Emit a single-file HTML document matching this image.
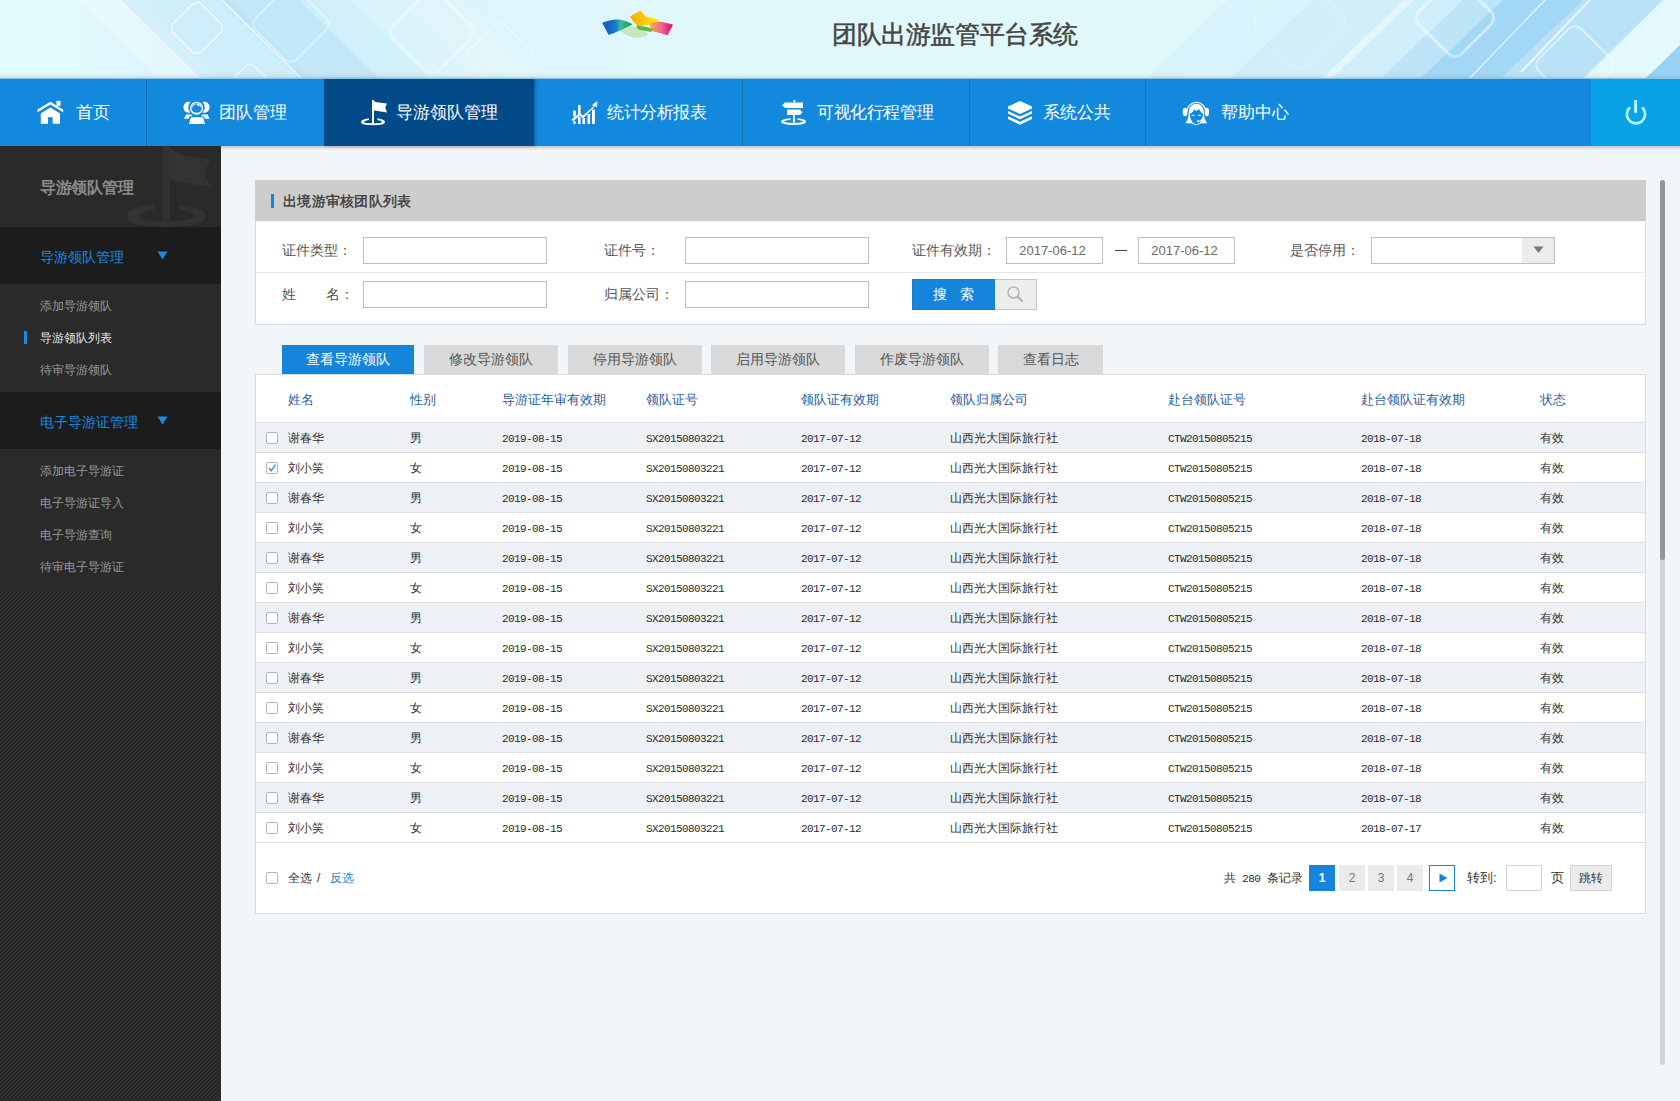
<!DOCTYPE html>
<html><head><meta charset="utf-8">
<style>
*{margin:0;padding:0;box-sizing:border-box}
html,body{width:1680px;height:1101px;overflow:hidden}
body{font-family:"Liberation Sans",sans-serif;background:#f3f6f9;position:relative;color:#333}
.abs{position:absolute}
#hdr{left:0;top:0;width:1680px;height:79px;background:#def6fc;overflow:hidden}
#nav{left:0;top:79px;width:1680px;height:67px;background:#1289dc}
.nv{position:absolute;top:0;height:67px;color:#fff;font-size:17px;line-height:67px}
.sep{position:absolute;top:0;width:1px;height:67px;background:#0d6cb4}
#side{left:0;top:146px;width:221px;height:955px;background:#2a2a2a;overflow:hidden}
.sb-band{position:absolute;left:0;width:221px;background:#1c1c1c}
.sb-t{position:absolute;left:40px;font-size:14px;color:#1a8ae0;line-height:20px}
.sb-i{position:absolute;left:40px;font-size:12px;color:#999;line-height:16px}
.panel{position:absolute;background:#fff;border:1px solid #dcdcdc}
.lbl{position:absolute;font-size:14px;color:#555;line-height:20px}
.inp{position:absolute;height:27px;border:1px solid #bdbdbd;background:#fff}
.tab{position:absolute;top:345px;height:29px;background:#d9d9d9;color:#555;font-size:14px;line-height:29px;text-align:center}
.tab.on{background:#1585dc;color:#fff}
.th{position:absolute;top:391px;font-size:13px;color:#2b5c95;line-height:18px}
.row{position:absolute;left:256px;width:1389px;height:30px;border-top:1px solid #dedede}
.row.odd{background:#edf0f5}
.c{position:absolute;top:0;line-height:30px;font-size:12px;color:#333;white-space:nowrap}
.m{font-family:"Liberation Mono",monospace;font-size:11px;letter-spacing:-0.6px;padding-top:1px;color:#2a2a2a}
.cb{position:absolute;left:10px;top:9px;width:12px;height:12px;border:1px solid #b5b5b5;border-radius:2px;background:#fff}
.pg{position:absolute;top:865px;width:26px;height:26px;background:#ebebeb;color:#777;font-size:12px;line-height:26px;text-align:center}
</style></head><body>

<!-- HEADER -->
<div id="hdr" class="abs">
<svg width="1680" height="79" style="position:absolute;left:0;top:0">
<defs>
<linearGradient id="hg" x1="0" x2="1" y1="0" y2="0">
<stop offset="0" stop-color="#e1f9fd"/><stop offset="0.05" stop-color="#e1f9fd"/><stop offset="0.12" stop-color="#d9f3fb"/><stop offset="0.25" stop-color="#dbf4fb"/><stop offset="0.4" stop-color="#e0f8fc"/><stop offset="1" stop-color="#e1f9fd"/>
</linearGradient>
</defs>
<rect width="1680" height="79" fill="url(#hg)"/>
<!-- left diagonal bands (\ direction) -->
<polygon points="80,0 140,0 220,79 160,79" fill="#ffffff" opacity="0.25"/>
<polygon points="120,0 230,0 310,79 200,79" fill="#bfe6f8" opacity="0.45"/>
<polygon points="220,0 300,0 380,79 300,79" fill="#a9dcf6" opacity="0.5"/>
<polygon points="300,0 350,0 430,79 380,79" fill="#c6ebf9" opacity="0.5"/>
<line x1="222" y1="0" x2="302" y2="79" stroke="#fff" stroke-width="1.5" opacity="0.8"/>
<line x1="120" y1="0" x2="200" y2="79" stroke="#fff" stroke-width="3" opacity="0.35"/>
<rect x="177" y="8" width="40" height="40" rx="7" transform="rotate(45 197 28)" fill="none" stroke="#fff" stroke-width="1.5" opacity="0.75"/>
<rect x="262" y="-5" width="58" height="58" rx="8" transform="rotate(45 291 24)" fill="none" stroke="#fff" stroke-width="2" opacity="0.4"/>
<rect x="230" y="70" width="40" height="40" rx="7" transform="rotate(45 250 90)" fill="none" stroke="#fff" stroke-width="2" opacity="0.5"/>
<rect x="400" y="0" width="64" height="64" rx="10" transform="rotate(45 432 32)" fill="none" stroke="#fff" stroke-width="2.5" opacity="0.35"/>
<rect x="475" y="30" width="50" height="50" rx="8" transform="rotate(45 500 55)" fill="none" stroke="#fff" stroke-width="1.5" opacity="0.35"/>
<rect x="0" y="0" width="82" height="79" fill="#e2f9fd" opacity="0.6"/>
<polygon points="400,0 460,0 540,79 480,79" fill="#ffffff" opacity="0.15"/>
<!-- right diagonal bands (/ direction) -->
<polygon points="1145,79 1228,0 1680,0 1680,79" fill="#d2f0fa" opacity="0.6"/>
<polygon points="1230,79 1313,0 1680,0 1680,79" fill="#c5eaf9" opacity="0.5"/>
<polygon points="1321,79 1404,0 1414,0 1331,79" fill="#ffffff" opacity="0.45"/>
<polygon points="1380,79 1463,0 1680,0 1680,79" fill="#aedcf6" opacity="0.55"/>
<polygon points="1420,79 1503,0 1583,0 1500,79" fill="#8ccdf3" opacity="0.55"/>
<polygon points="1500,79 1583,0 1663,0 1580,79" fill="#b5e0f7" opacity="0.6"/>
<polygon points="1583,79 1663,0 1680,0 1680,79" fill="#e4f9fd" opacity="1"/>
<polygon points="1645,79 1680,45 1680,79" fill="#98d3f5"/>
<line x1="1469" y1="79" x2="1545" y2="0" stroke="#fff" stroke-width="1.2" opacity="0.85"/>
<line x1="1521" y1="72" x2="1590" y2="0" stroke="#fff" stroke-width="1.8" opacity="0.8"/>
<rect x="1265" y="-12" width="70" height="70" rx="10" transform="rotate(45 1300 23)" fill="none" stroke="#fff" stroke-width="1.5" opacity="0.3"/>
<rect x="1425" y="-12" width="60" height="60" rx="9" transform="rotate(45 1455 18)" fill="none" stroke="#fff" stroke-width="3" opacity="0.45"/>
<rect x="1545" y="35" width="60" height="60" rx="9" transform="rotate(45 1575 65)" fill="none" stroke="#fff" stroke-width="2" opacity="0.5"/>
<!-- bottom shadow -->
<defs><linearGradient id="sh" x1="0" x2="0" y1="0" y2="1"><stop offset="0" stop-color="#8c7a66" stop-opacity="0"/><stop offset="0.6" stop-color="#8c7a66" stop-opacity="0.08"/><stop offset="1" stop-color="#9a7a56" stop-opacity="0.35"/></linearGradient></defs>
<rect x="0" y="72" width="1680" height="7" fill="url(#sh)"/>
</svg>
<svg width="85" height="40" viewBox="0 0 85 40" style="position:absolute;left:595px;top:5px">
<defs>
<linearGradient id="lg1" x1="0" x2="1"><stop offset="0" stop-color="#1556b8"/><stop offset="0.45" stop-color="#0f7fcc"/><stop offset="0.6" stop-color="#3cb8a0"/><stop offset="1" stop-color="#10a050"/></linearGradient>
<linearGradient id="lg2" x1="0" x2="1"><stop offset="0" stop-color="#f8a800"/><stop offset="1" stop-color="#fff000"/></linearGradient>
<linearGradient id="lg3" x1="0" x2="1"><stop offset="0" stop-color="#f8b040"/><stop offset="0.5" stop-color="#f46a8a"/><stop offset="1" stop-color="#e0007a"/></linearGradient>
</defs>
<path d="M25,25.5 C32,20 45,20 53,29.5 C46,34 35,34.5 25,25.5 Z" fill="#c8e6bc"/>
<path d="M7.1,17.7 C13,15.5 19,14 25.3,14.7 C30,15.3 34,17 37.5,19.2 C34,21.5 29,23.5 24.3,25.8 C20,27.8 17,29 13.7,29.9 C11,25 9,21 7.1,17.7 Z" fill="url(#lg1)"/>
<path d="M35,11.6 L45.5,5.6 L50.6,11.6 C56,13 60,13.5 64.8,14.7 L55.7,19.2 C50,20 47,21 44,21.8 C41,19 39,17.5 38.5,16.7 Z" fill="url(#lg2)"/>
<path d="M54,18.5 C59,17.2 62,16.7 65.8,16.7 C70,17.5 74,18.5 78,19.7 L72.4,30.4 C69,29 66,28.5 63.3,27.8 C61,27.2 60,26.8 57.5,26.3 Z" fill="url(#lg3)"/>
<path d="M41,20.5 C47,20.8 53,22 58.5,24.3 L56,27 C51,26 46,25 43,24.2 Z" fill="#66b43e"/>
</svg>
<div class="abs" style="left:832px;top:18px;font-size:25px;line-height:32px;color:#444;letter-spacing:-0.4px;-webkit-text-stroke:0.5px #444">团队出游监管平台系统</div>
</div>

<!-- NAV -->
<div id="nav" class="abs">

<div class="abs" style="left:324px;top:0;width:210px;height:67px;background:#024a88;box-shadow:2px 0 3px rgba(0,0,0,0.25)"></div>
<div class="abs" style="left:1591px;top:0;width:89px;height:67px;background:#0aa2e6"></div>
<div class="sep" style="left:146px"></div>
<div class="sep" style="left:742px"></div>
<div class="sep" style="left:969px"></div>
<div class="sep" style="left:1145px"></div>
<svg width="1680" height="67" style="position:absolute;left:0;top:0" fill="#fff">
<g transform="translate(0,-79)">
<!-- house -->
<path d="M37.5,109.5 L50.3,101.8 L63.2,109.5 L63.2,112.2 L50.3,104.6 L37.5,112.2 Z"/>
<rect x="56.5" y="100.8" width="4" height="5"/>
<path d="M40.8,113.6 L50.3,107.6 L60,113.6 L60,123.8 L52.7,123.8 L52.7,117.3 L48,117.3 L48,123.8 L40.8,123.8 Z"/>
<!-- team -->
<path d="M190.5,102 A5.5,5.5 0 1 0 190.5,112.5 A7,7 0 0 1 190.5,102 Z"/>
<path d="M202.5,102 A5.5,5.5 0 1 1 202.5,112.5 A7,7 0 0 0 202.5,102 Z"/>
<circle cx="196.6" cy="108.2" r="6.5"/>
<path d="M191.5,108.6 Q192.6,105.8 195,104.8 L195.6,102.8 L197,105.3 Q200.6,105.6 201.7,108.2 A5.15,5.15 0 0 1 191.5,108.6 Z" fill="#1289dc"/>
<path d="M191.3,108.5 A5.3,5.3 0 0 1 201.9,108.5" fill="none" stroke="#1289dc" stroke-width="0.6"/>
<path d="M184,118.8 L186,114.5 L191,114.5 L192.5,116 L189.5,116.5 L188.8,118.8 Z"/>
<path d="M209.6,118.8 L207.6,114.5 L202.6,114.5 L201,116 L204,116.5 L204.8,118.8 Z"/>
<path d="M188.9,123.9 L191,117.3 L203,117.3 L205,123.9 Z"/>
<!-- flag -->
<rect x="372" y="100" width="2" height="23.5"/>
<path d="M374,101 L375.5,102 Q380,102.5 387,103.6 L385.3,107.5 L387,112.6 Q381,111.5 374,110.5 Z"/>
<path d="M369,118.3 Q361,119.5 361,122 Q361,125.3 373,125.3 Q385,125.3 385,122 Q385,119.5 377.3,118.3 L377.3,120 Q382,120.8 382,122 Q382,123.2 373,123.2 Q364,123.2 364,122 Q364,120.8 369,120 Z"/>
<!-- chart -->
<rect x="573.2" y="110.5" width="2.6" height="6"/>
<rect x="578" y="105" width="2.6" height="10"/>
<rect x="573.5" y="121" width="2" height="3"/>
<rect x="578" y="117" width="2.6" height="7"/>
<rect x="582.5" y="118" width="2.6" height="6"/>
<rect x="587.5" y="114" width="2.6" height="10"/>
<rect x="592" y="109.5" width="2.8" height="14.5"/>
<path d="M572,119.5 L579.5,113.5 L583,116 L594,106.5 L592.5,105 L597,101.8 L596.5,107 L595.3,105.5 L583,117.8 L579.6,115.5 L573,120.8 Z" stroke="#fff" stroke-width="0.8"/>
<!-- signpost -->
<rect x="793.5" y="100" width="1.8" height="2.5"/>
<path d="M785,102.5 L803,102.5 L803,108 L785,108 L782,105.3 Z"/>
<path d="M787,109.4 L800,109.4 L802.5,112.3 L800,115 L787,115 Z"/>
<rect x="793" y="115" width="2" height="8.5"/>
<path d="M790.5,118.3 Q781,119.3 781,121.6 Q781,125 794,125 Q806,125 806,121.6 Q806,119.3 797.5,118.3 L797.5,119.9 Q803,120.6 803,121.6 Q803,123 794,123 Q784,123 784,121.6 Q784,120.6 790.5,119.9 Z"/>
<!-- layers -->
<path d="M1020,101 L1032,106.5 L1032,108.6 L1020,114 L1008,108.6 L1008,106.5 Z"/>
<path d="M1008,111 L1020,116.6 L1032,111 L1032,113.6 L1020,119.3 L1008,113.6 Z"/>
<path d="M1008,116.2 L1020,121.8 L1032,116.2 L1032,119 L1020,124.8 L1008,119 Z"/>
<!-- headset -->
<path d="M1186.4,113.5 A9.9,11.2 0 0 1 1206.2,113.5" fill="none" stroke="#fff" stroke-width="1.4"/>
<ellipse cx="1185" cy="112" rx="2.3" ry="4.2"/>
<ellipse cx="1206.8" cy="112" rx="2.3" ry="4.2"/>
<path stroke="#1289dc" stroke-width="0.8" d="M1188.2,112.5 A8.1,9.2 0 0 1 1204.4,112.5 L1204.8,118 L1207.6,123.8 L1201,123.8 Q1198.5,125.4 1196.3,125.4 Q1194,125.4 1191.6,123.8 L1185,123.8 L1187.8,118 Z"/>
<path d="M1189.6,114.2 C1192,113 1194,111 1194.6,108.8 L1195.2,111 C1197,110.5 1198,110 1198.8,109 C1200,111 1202,113 1203.2,114.2 C1203,119 1200,124.3 1196.4,124.3 C1192.8,124.3 1190,119 1189.6,114.2 Z" fill="#1289dc"/>
<path d="M1191.3,116 A1.6,1.2 0 0 1 1194.6,116 Z"/>
<path d="M1197.8,116 A1.6,1.2 0 0 1 1201.1,116 Z"/>
<path d="M1203,116.5 Q1202.5,120.8 1198,121.3" fill="none" stroke="#fff" stroke-width="1.1"/>
<circle cx="1197.8" cy="121.2" r="1"/>
</g>
<g transform="translate(0,-79)" fill="none" stroke="#bdf2ff" stroke-width="2.6">
<path d="M1630,107.5 A9.05,9.05 0 1 0 1642,107.5"/>
<line x1="1635.6" y1="100.1" x2="1635.6" y2="112.8" stroke-width="3"/>
</g>
</svg>
<div class="nv" style="left:76px">首页</div>
<div class="nv" style="left:219px">团队管理</div>
<div class="nv" style="left:396px">导游领队管理</div>
<div class="nv" style="left:607px;letter-spacing:-0.4px">统计分析报表</div>
<div class="nv" style="left:817px;letter-spacing:-0.4px">可视化行程管理</div>
<div class="nv" style="left:1043px">系统公共</div>
<div class="nv" style="left:1221px">帮助中心</div>
</div>

<!-- SIDEBAR -->
<div id="side" class="abs">
<svg width="221" height="81" style="position:absolute;left:0;top:0">
<rect width="221" height="81" fill="#2a2a2a"/>
<g fill="#333333" transform="translate(0,-146)">
<rect x="163.2" y="146" width="6.3" height="74"/>
<path d="M169.5,147 Q178,158 210.5,159 L204,173 L211,187 Q190,184 169.5,180 Z"/>
<path d="M154,205 Q127,208 127,215.5 Q127,227 166.4,227 Q206,227 206,215.5 Q206,208 179,205 L179,210 Q194,212 194,215.5 Q194,221 166.4,221 Q139,221 139,215.5 Q139,212 154,210 Z"/>
</g>
</svg>
<div class="abs" style="left:40px;top:32px;font-size:16px;letter-spacing:-0.5px;font-weight:bold;color:#8a8a8a;line-height:20px">导游领队管理</div>
<div class="sb-band" style="top:81px;height:57px"></div>
<div class="sb-t" style="top:101px">导游领队管理</div>
<svg width="12" height="10" style="position:absolute;left:157px;top:105px"><path d="M0.5,0.5 L10.5,0.5 L5.5,8.5 Z" fill="#1a8ae0"/></svg>
<div class="sb-i" style="top:152px">添加导游领队</div>
<div class="abs" style="left:24px;top:185px;width:3px;height:13px;background:#1a8ae0"></div>
<div class="sb-i" style="top:184px;color:#e6e6e6">导游领队列表</div>
<div class="sb-i" style="top:216px">待审导游领队</div>
<div class="sb-band" style="top:246px;height:57px"></div>
<div class="sb-t" style="top:266px">电子导游证管理</div>
<svg width="12" height="10" style="position:absolute;left:157px;top:270px"><path d="M0.5,0.5 L10.5,0.5 L5.5,8.5 Z" fill="#1a8ae0"/></svg>
<div class="sb-i" style="top:317px">添加电子导游证</div>
<div class="sb-i" style="top:349px">电子导游证导入</div>
<div class="sb-i" style="top:381px">电子导游查询</div>
<div class="sb-i" style="top:413px">待审电子导游证</div>
<svg width="221" height="512" style="position:absolute;left:0;top:443px" shape-rendering="crispEdges"><defs><pattern id="stp" width="4" height="4" patternUnits="userSpaceOnUse"><rect width="4" height="4" fill="#313131"/><rect x="3" y="0" width="1" height="1" fill="#1b1b1b"/><rect x="2" y="1" width="1" height="1" fill="#1b1b1b"/><rect x="1" y="2" width="1" height="1" fill="#1b1b1b"/><rect x="0" y="3" width="1" height="1" fill="#1b1b1b"/></pattern></defs><rect width="221" height="512" fill="url(#stp)"/></svg>
</div>

<!-- MAIN -->
<div id="main">
<!-- sidebar edge shadow -->

<div class="abs" style="left:0;top:78px;width:1680px;height:1px;background:#86c6ee"></div>
<div class="abs" style="left:221px;top:146px;width:1459px;height:5px;background:linear-gradient(180deg,rgba(110,110,110,0.38),rgba(170,170,170,0.15) 60%,rgba(243,246,249,0))"></div>
<!-- scrollbar -->
<div class="abs" style="left:1660px;top:180px;width:5px;height:885px;background:#d4d4d4;border-radius:3px"></div>
<div class="abs" style="left:1660px;top:180px;width:5px;height:380px;background:#959595;border-radius:3px"></div>

<!-- search panel -->
<div class="panel" style="left:255px;top:180px;width:1391px;height:145px"></div>
<div class="abs" style="left:255px;top:180px;width:1391px;height:41px;background:#cdcdcd"></div>
<div class="abs" style="left:271px;top:194px;width:3px;height:14px;background:#1585dc"></div>
<div class="abs" style="left:283px;top:191px;font-size:14px;line-height:20px;color:#383838;letter-spacing:0.3px;-webkit-text-stroke:0.35px #383838">出境游审核团队列表</div>
<div class="abs" style="left:256px;top:272px;width:1389px;height:1px;background:#e6e6e6"></div>

<div class="lbl" style="left:282px;top:240px">证件类型：</div>
<div class="inp" style="left:363px;top:237px;width:184px"></div>
<div class="lbl" style="left:604px;top:240px">证件号：</div>
<div class="inp" style="left:685px;top:237px;width:184px"></div>
<div class="lbl" style="left:912px;top:240px">证件有效期：</div>
<div class="inp" style="left:1006px;top:237px;width:97px;font-size:13px;color:#6a6a6a;line-height:25px;text-align:center;padding-right:4px">2017-06-12</div>
<div class="abs" style="left:1115px;top:250px;width:12px;height:1px;background:#444"></div>
<div class="inp" style="left:1138px;top:237px;width:97px;font-size:13px;color:#6a6a6a;line-height:25px;text-align:center;padding-right:4px">2017-06-12</div>
<div class="lbl" style="left:1290px;top:240px">是否停用：</div>
<div class="inp" style="left:1371px;top:237px;width:184px"></div>
<div class="abs" style="left:1522px;top:238px;width:32px;height:25px;background:#ececec"></div>
<svg width="12" height="8" style="position:absolute;left:1533px;top:246px"><path d="M0.5,0.5 L10.5,0.5 L5.5,7 Z" fill="#777"/></svg>

<div class="lbl" style="left:282px;top:284px">姓</div>
<div class="lbl" style="left:326px;top:284px">名：</div>
<div class="inp" style="left:363px;top:281px;width:184px"></div>
<div class="lbl" style="left:604px;top:284px">归属公司：</div>
<div class="inp" style="left:685px;top:281px;width:184px"></div>
<div class="abs" style="left:912px;top:279px;width:83px;height:31px;background:#1585dc;border:1px solid #1a7cc8;color:#fff;font-size:14px;line-height:28px;text-align:center;letter-spacing:13px;padding-left:13px">搜索</div>
<div class="abs" style="left:995px;top:279px;width:42px;height:31px;background:#ededed;border:1px solid #c4c4c4;border-left:none"></div>
<svg width="20" height="20" style="position:absolute;left:1006px;top:285px"><circle cx="7.5" cy="7.5" r="5.5" fill="none" stroke="#b5b5b5" stroke-width="1.6"/><line x1="11.5" y1="11.5" x2="16" y2="16" stroke="#b5b5b5" stroke-width="2.2" stroke-linecap="round"/></svg>
<!-- tabs -->
<div class="tab on" style="left:282px;width:132px">查看导游领队</div>
<div class="tab" style="left:424px;width:134px">修改导游领队</div>
<div class="tab" style="left:568px;width:134px">停用导游领队</div>
<div class="tab" style="left:711px;width:134px">启用导游领队</div>
<div class="tab" style="left:855px;width:134px">作废导游领队</div>
<div class="tab" style="left:998px;width:105px">查看日志</div>
<!-- table panel -->
<div class="panel" style="left:255px;top:374px;width:1391px;height:540px"></div>
<div class="th" style="left:288px">姓名</div>
<div class="th" style="left:410px">性别</div>
<div class="th" style="left:502px">导游证年审有效期</div>
<div class="th" style="left:646px">领队证号</div>
<div class="th" style="left:801px">领队证有效期</div>
<div class="th" style="left:950px">领队归属公司</div>
<div class="th" style="left:1168px">赴台领队证号</div>
<div class="th" style="left:1361px">赴台领队证有效期</div>
<div class="th" style="left:1540px">状态</div>
<div class="row odd" style="top:422px"><div class="cb"></div><div class="c" style="left:32px">谢春华</div><div class="c" style="left:154px">男</div><div class="c m" style="left:246px">2019-08-15</div><div class="c m" style="left:390px">SX20150803221</div><div class="c m" style="left:545px">2017-07-12</div><div class="c" style="left:694px">山西光大国际旅行社</div><div class="c m" style="left:912px">CTW20150805215</div><div class="c m" style="left:1105px">2018-07-18</div><div class="c" style="left:1284px">有效</div></div>
<div class="row" style="top:452px"><div class="cb"><svg width="10" height="10" style="position:absolute;left:0;top:0"><path d="M2,5 L4.2,7.8 L8.5,1.5" fill="none" stroke="#1890ee" stroke-width="1.3"/></svg></div><div class="c" style="left:32px">刘小笑</div><div class="c" style="left:154px">女</div><div class="c m" style="left:246px">2019-08-15</div><div class="c m" style="left:390px">SX20150803221</div><div class="c m" style="left:545px">2017-07-12</div><div class="c" style="left:694px">山西光大国际旅行社</div><div class="c m" style="left:912px">CTW20150805215</div><div class="c m" style="left:1105px">2018-07-18</div><div class="c" style="left:1284px">有效</div></div>
<div class="row odd" style="top:482px"><div class="cb"></div><div class="c" style="left:32px">谢春华</div><div class="c" style="left:154px">男</div><div class="c m" style="left:246px">2019-08-15</div><div class="c m" style="left:390px">SX20150803221</div><div class="c m" style="left:545px">2017-07-12</div><div class="c" style="left:694px">山西光大国际旅行社</div><div class="c m" style="left:912px">CTW20150805215</div><div class="c m" style="left:1105px">2018-07-18</div><div class="c" style="left:1284px">有效</div></div>
<div class="row" style="top:512px"><div class="cb"></div><div class="c" style="left:32px">刘小笑</div><div class="c" style="left:154px">女</div><div class="c m" style="left:246px">2019-08-15</div><div class="c m" style="left:390px">SX20150803221</div><div class="c m" style="left:545px">2017-07-12</div><div class="c" style="left:694px">山西光大国际旅行社</div><div class="c m" style="left:912px">CTW20150805215</div><div class="c m" style="left:1105px">2018-07-18</div><div class="c" style="left:1284px">有效</div></div>
<div class="row odd" style="top:542px"><div class="cb"></div><div class="c" style="left:32px">谢春华</div><div class="c" style="left:154px">男</div><div class="c m" style="left:246px">2019-08-15</div><div class="c m" style="left:390px">SX20150803221</div><div class="c m" style="left:545px">2017-07-12</div><div class="c" style="left:694px">山西光大国际旅行社</div><div class="c m" style="left:912px">CTW20150805215</div><div class="c m" style="left:1105px">2018-07-18</div><div class="c" style="left:1284px">有效</div></div>
<div class="row" style="top:572px"><div class="cb"></div><div class="c" style="left:32px">刘小笑</div><div class="c" style="left:154px">女</div><div class="c m" style="left:246px">2019-08-15</div><div class="c m" style="left:390px">SX20150803221</div><div class="c m" style="left:545px">2017-07-12</div><div class="c" style="left:694px">山西光大国际旅行社</div><div class="c m" style="left:912px">CTW20150805215</div><div class="c m" style="left:1105px">2018-07-18</div><div class="c" style="left:1284px">有效</div></div>
<div class="row odd" style="top:602px"><div class="cb"></div><div class="c" style="left:32px">谢春华</div><div class="c" style="left:154px">男</div><div class="c m" style="left:246px">2019-08-15</div><div class="c m" style="left:390px">SX20150803221</div><div class="c m" style="left:545px">2017-07-12</div><div class="c" style="left:694px">山西光大国际旅行社</div><div class="c m" style="left:912px">CTW20150805215</div><div class="c m" style="left:1105px">2018-07-18</div><div class="c" style="left:1284px">有效</div></div>
<div class="row" style="top:632px"><div class="cb"></div><div class="c" style="left:32px">刘小笑</div><div class="c" style="left:154px">女</div><div class="c m" style="left:246px">2019-08-15</div><div class="c m" style="left:390px">SX20150803221</div><div class="c m" style="left:545px">2017-07-12</div><div class="c" style="left:694px">山西光大国际旅行社</div><div class="c m" style="left:912px">CTW20150805215</div><div class="c m" style="left:1105px">2018-07-18</div><div class="c" style="left:1284px">有效</div></div>
<div class="row odd" style="top:662px"><div class="cb"></div><div class="c" style="left:32px">谢春华</div><div class="c" style="left:154px">男</div><div class="c m" style="left:246px">2019-08-15</div><div class="c m" style="left:390px">SX20150803221</div><div class="c m" style="left:545px">2017-07-12</div><div class="c" style="left:694px">山西光大国际旅行社</div><div class="c m" style="left:912px">CTW20150805215</div><div class="c m" style="left:1105px">2018-07-18</div><div class="c" style="left:1284px">有效</div></div>
<div class="row" style="top:692px"><div class="cb"></div><div class="c" style="left:32px">刘小笑</div><div class="c" style="left:154px">女</div><div class="c m" style="left:246px">2019-08-15</div><div class="c m" style="left:390px">SX20150803221</div><div class="c m" style="left:545px">2017-07-12</div><div class="c" style="left:694px">山西光大国际旅行社</div><div class="c m" style="left:912px">CTW20150805215</div><div class="c m" style="left:1105px">2018-07-18</div><div class="c" style="left:1284px">有效</div></div>
<div class="row odd" style="top:722px"><div class="cb"></div><div class="c" style="left:32px">谢春华</div><div class="c" style="left:154px">男</div><div class="c m" style="left:246px">2019-08-15</div><div class="c m" style="left:390px">SX20150803221</div><div class="c m" style="left:545px">2017-07-12</div><div class="c" style="left:694px">山西光大国际旅行社</div><div class="c m" style="left:912px">CTW20150805215</div><div class="c m" style="left:1105px">2018-07-18</div><div class="c" style="left:1284px">有效</div></div>
<div class="row" style="top:752px"><div class="cb"></div><div class="c" style="left:32px">刘小笑</div><div class="c" style="left:154px">女</div><div class="c m" style="left:246px">2019-08-15</div><div class="c m" style="left:390px">SX20150803221</div><div class="c m" style="left:545px">2017-07-12</div><div class="c" style="left:694px">山西光大国际旅行社</div><div class="c m" style="left:912px">CTW20150805215</div><div class="c m" style="left:1105px">2018-07-18</div><div class="c" style="left:1284px">有效</div></div>
<div class="row odd" style="top:782px"><div class="cb"></div><div class="c" style="left:32px">谢春华</div><div class="c" style="left:154px">男</div><div class="c m" style="left:246px">2019-08-15</div><div class="c m" style="left:390px">SX20150803221</div><div class="c m" style="left:545px">2017-07-12</div><div class="c" style="left:694px">山西光大国际旅行社</div><div class="c m" style="left:912px">CTW20150805215</div><div class="c m" style="left:1105px">2018-07-18</div><div class="c" style="left:1284px">有效</div></div>
<div class="row" style="top:812px"><div class="cb"></div><div class="c" style="left:32px">刘小笑</div><div class="c" style="left:154px">女</div><div class="c m" style="left:246px">2019-08-15</div><div class="c m" style="left:390px">SX20150803221</div><div class="c m" style="left:545px">2017-07-12</div><div class="c" style="left:694px">山西光大国际旅行社</div><div class="c m" style="left:912px">CTW20150805215</div><div class="c m" style="left:1105px">2018-07-17</div><div class="c" style="left:1284px">有效</div></div>
<div class="abs" style="left:256px;top:842px;width:1389px;height:1px;background:#dedede"></div>
<div class="cb" style="left:266px;top:872px"></div>
<div class="abs" style="left:288px;top:868px;font-size:12px;line-height:20px;color:#333">全选</div><div class="abs" style="left:317px;top:868px;font-size:12px;line-height:20px;color:#333">/</div><div class="abs" style="left:330px;top:868px;font-size:12px;line-height:20px;color:#1a7fc9">反选</div>
<div class="abs" style="left:1224px;top:868px;font-size:12px;line-height:20px;color:#333;word-spacing:3px">共 <span class="m" style="word-spacing:0">280</span> 条记录</div>
<div class="pg" style="left:1309px;background:#1585dc;color:#fff;font-weight:bold">1</div>
<div class="pg" style="left:1339px">2</div>
<div class="pg" style="left:1368px">3</div>
<div class="pg" style="left:1397px">4</div>
<div class="pg" style="left:1429px;background:#fff;border:1px solid #1585dc"><svg width="10" height="10" style="position:absolute;left:9px;top:7px"><path d="M0.5,0.5 L8.5,5 L0.5,9.5 Z" fill="#1585dc"/></svg></div>
<div class="abs" style="left:1467px;top:868px;font-size:13px;line-height:20px;color:#333">转到:</div>
<div class="abs" style="left:1506px;top:865px;width:36px;height:26px;border:1px solid #d5d5d5;background:#fff"></div>
<div class="abs" style="left:1551px;top:868px;font-size:13px;line-height:20px;color:#333">页</div>
<div class="abs" style="left:1570px;top:865px;width:42px;height:26px;border:1px solid #d5d5d5;background:#ececec;font-size:12px;line-height:24px;text-align:center;color:#333">跳转</div>
</div>

</body></html>
